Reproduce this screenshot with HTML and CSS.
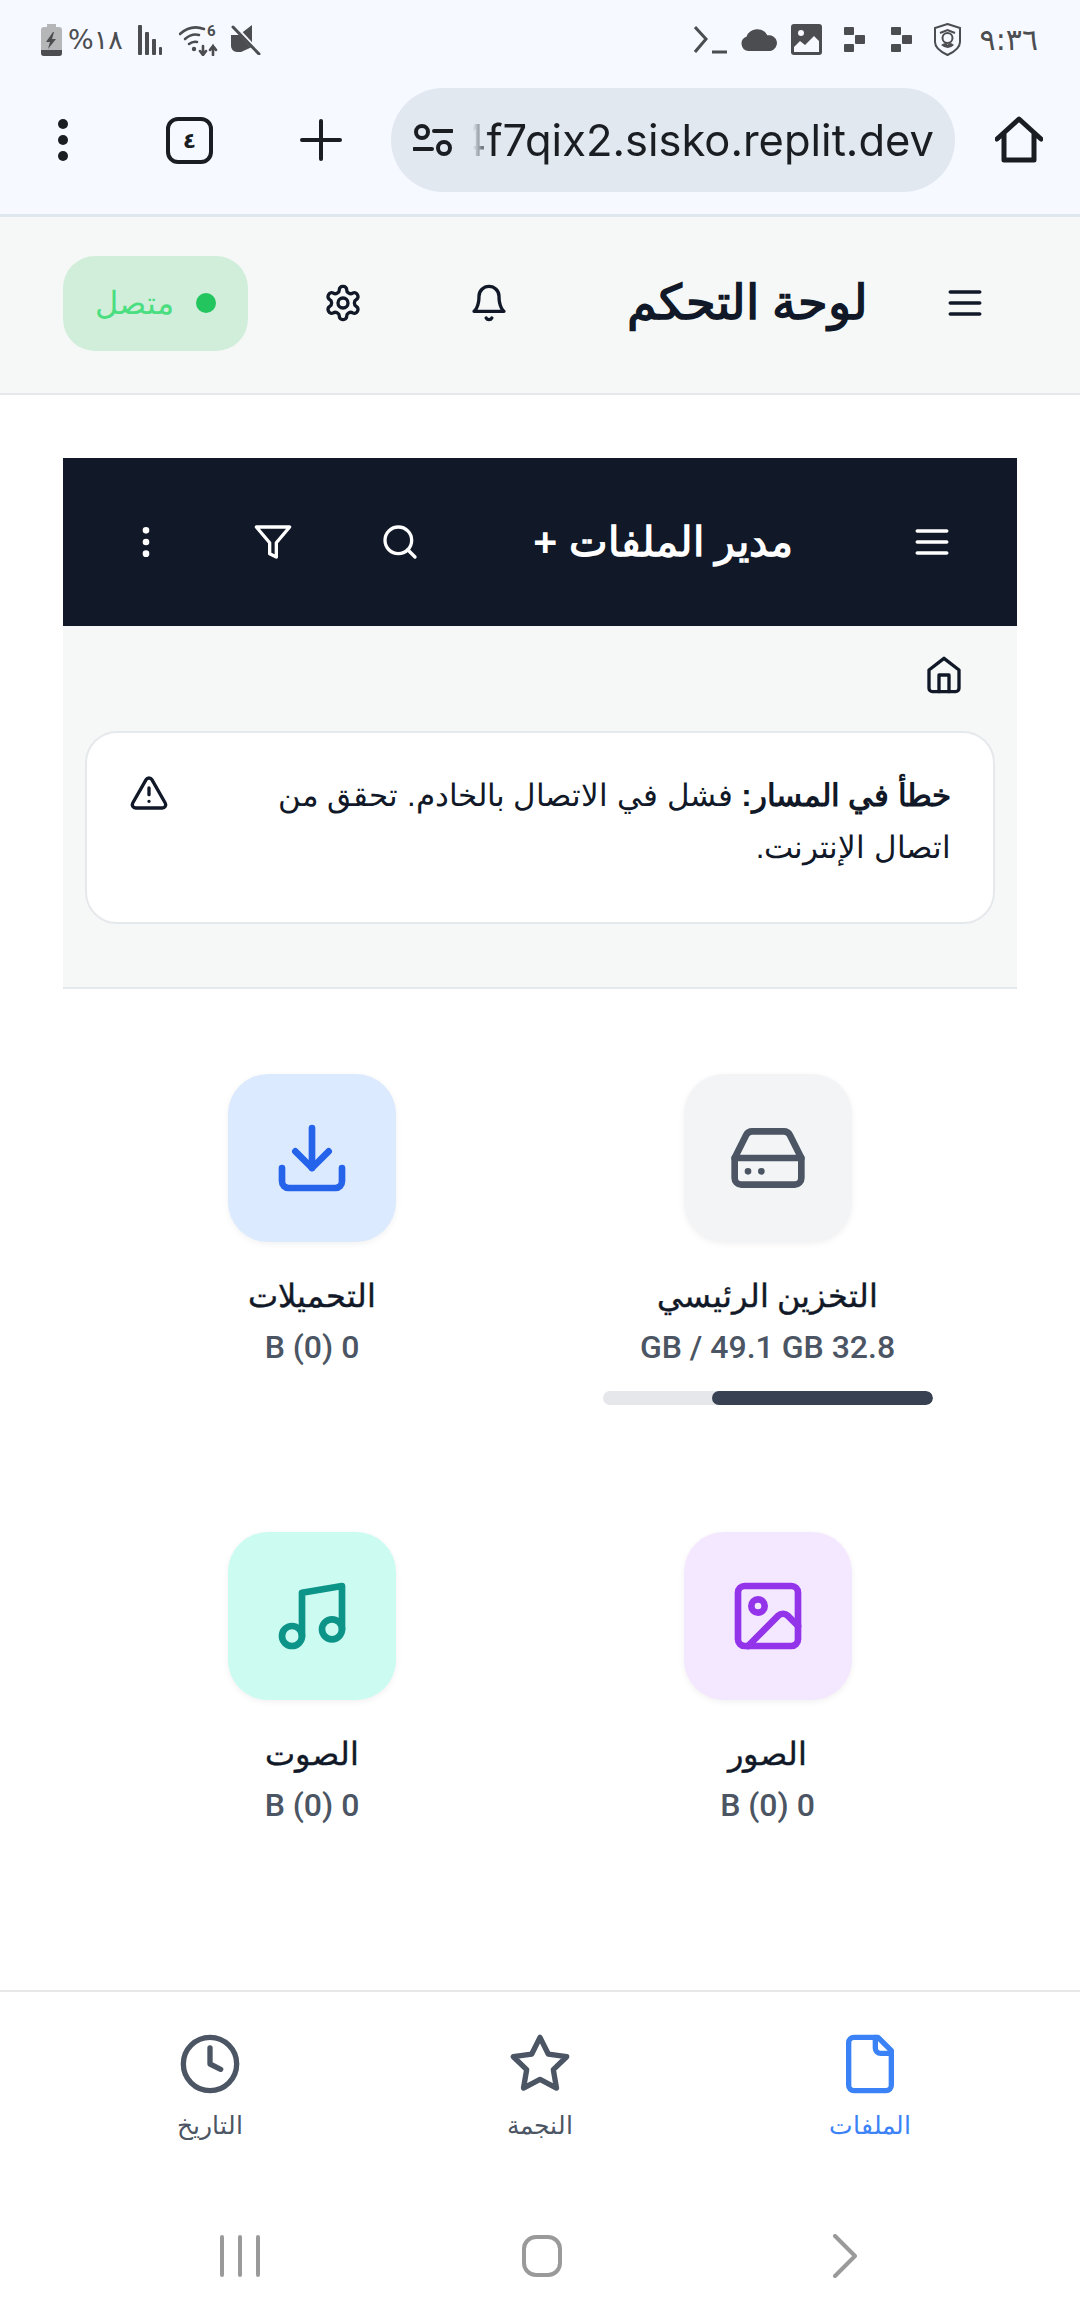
FILE: index.html
```html
<!DOCTYPE html>
<html lang="ar" dir="rtl">

<head>
    <meta charset="UTF-8">
    <title>لوحة التحكم</title>
    <link rel="stylesheet" href="styles.css">
</head>

<body>
    <!-- شريط الحالة -->
    <div class="status" dir="ltr">
        <div class="status-side">
            <svg class="st-battery" viewBox="0 0 21 32"><path fill="#b4b6b8" d="M6 0h9v3h3a3 3 0 0 1 3 3v23a3 3 0 0 1-3 3H3a3 3 0 0 1-3-3V6a3 3 0 0 1 3-3h3z"/><path fill="#4b4d50" d="M0 26h21v3a3 3 0 0 1-3 3H3a3 3 0 0 1-3-3z"/><path fill="#4b4d50" d="M12 8 5 18h4l-2 7 8-10h-4l2-7z"/></svg>
            <span class="st-text st-pct">%١٨</span>
            <svg class="st-signal" viewBox="0 0 28 30"><g fill="#4b4d50"><rect x="0" y="0" width="4" height="30" rx="1"/><rect x="7" y="7" width="4" height="23" rx="1"/><rect x="14" y="14" width="4" height="16" rx="1"/><rect x="21" y="22" width="3" height="8" rx="1"/></g></svg>
            <svg class="st-wifi" viewBox="0 0 40 32"><g fill="none" stroke="#4b4d50" stroke-width="2.6" stroke-linecap="round"><path d="M1 10Q12 0 25 5"/><path d="M6 15q7-6 14-4"/><path d="M10 20q4-3 8-2"/><path d="M24 31v-9m-3 5 3 4 3-4"/><path d="M34 31v-9m-3 4 3-4 3 4"/></g><circle cx="15" cy="25" r="2.2" fill="#4b4d50"/><text x="28" y="12" class="st-six">6</text></svg>
            <svg class="st-mute" viewBox="0 0 30 30"><path fill="#4b4d50" d="M0 10h8L21 0v22L10 27H6a6 6 0 0 1-6-6z"/><path stroke="#f6f9ff" stroke-width="4.500" d="M3 1l26 28"/><path stroke="#4b4d50" stroke-width="3" stroke-linecap="round" d="M2 2l26 27"/></svg>
        </div>
        <div class="status-side">
            <svg class="st-term" viewBox="0 0 33 30"><path fill="none" stroke="#4b4d50" stroke-width="3" d="M1 2l11 12L1 27"/><path stroke="#4b4d50" stroke-width="3" d="M18 27h15"/></svg>
            <svg class="st-cloud" viewBox="0 0 36 22"><path fill="#4b4d50" d="M8 22a7 7 0 0 1-2-13.600A11 11 0 0 1 26 7a7.500 7.500 0 0 1 3 15z"/></svg>
            <svg class="st-img" viewBox="0 0 31 31"><rect width="31" height="31" rx="3" fill="#4b4d50"/><path fill="#f6f9ff" d="M3 28v-5l6-6 5 4 9-9 5 5v11z"/><circle cx="10" cy="9" r="3" fill="#f6f9ff"/></svg>
            <svg class="st-dots" viewBox="0 0 21 25"><g fill="#4b4d50"><rect width="10" height="8" rx="1"/><rect x="11" y="8" width="10" height="9" rx="1"/><rect y="17" width="10" height="8" rx="1"/></g></svg>
            <svg class="st-dots" viewBox="0 0 21 25"><g fill="#4b4d50"><rect width="10" height="8" rx="1"/><rect x="11" y="8" width="10" height="9" rx="1"/><rect y="17" width="10" height="8" rx="1"/></g></svg>
            <svg class="st-shield" viewBox="0 0 27 33"><path fill="none" stroke="#4b4d50" stroke-width="2" d="M13.500 1 26 5v14c0 6-6 10-12.500 13C7 29 1 25 1 19V5z"/><path fill="none" stroke="#4b4d50" stroke-width="2" d="M6 10l7.500-3 7.500 3"/><circle cx="13.500" cy="15" r="5" fill="none" stroke="#4b4d50" stroke-width="2"/><path fill="#4b4d50" d="M7 22q6-4 6.500 0 2-4 6.500 0-6 6-13 0z"/></svg>
            <span class="st-text st-time">٩:٣٦</span>
        </div>
    </div>

    <!-- شريط المتصفح -->
    <div class="browser" dir="ltr">
        <svg class="br-dots" viewBox="0 0 12 42"><circle cx="6" cy="5" r="5"/><circle cx="6" cy="21" r="5"/><circle cx="6" cy="37" r="5"/></svg>
        <div class="br-tabs">٤</div>
        <svg class="br-plus" viewBox="0 0 42 42"><path d="M21 2v38M2 21h38"/></svg>
        <div class="br-url">
            <svg class="br-tune" viewBox="0 0 40 32"><circle cx="9" cy="8" r="6"/><path d="M21 7h18M1 25h18"/><circle cx="31" cy="24" r="6"/></svg>
            <div class="br-addr"><span dir="ltr">4f7qix2.sisko.replit.dev</span></div>
        </div>
        <svg class="br-home" viewBox="0 0 48 48"><path d="M2 23 24 3l22 20M9 18v26h30V18"/></svg>
    </div>

    <!-- رأس التطبيق -->
    <header class="app-head">
        <svg class="ic ic-44" viewBox="0 0 24 24"><path d="M4 6h16M4 12h16M4 18h16"/></svg>
        <h1 class="app-title">لوحة التحكم</h1>
        <svg class="ic ic-40 bell" viewBox="0 0 24 24"><path d="M6 8a6 6 0 0 1 12 0c0 7 3 9 3 9H3s3-2 3-9"/><path d="M10.300 21a1.940 1.940 0 0 0 3.400 0"/></svg>
        <svg class="ic ic-40 gear" viewBox="0 0 24 24"><path d="M12.220 2h-.44a2 2 0 0 0-2 2v.18a2 2 0 0 1-1 1.730l-.43.25a2 2 0 0 1-2 0l-.15-.08a2 2 0 0 0-2.730.73l-.22.38a2 2 0 0 0 .73 2.730l.15.1a2 2 0 0 1 1 1.720v.51a2 2 0 0 1-1 1.740l-.15.09a2 2 0 0 0-.73 2.730l.22.38a2 2 0 0 0 2.730.73l.15-.08a2 2 0 0 1 2 0l.43.25a2 2 0 0 1 1 1.730V20a2 2 0 0 0 2 2h.44a2 2 0 0 0 2-2v-.18a2 2 0 0 1 1-1.730l.43-.25a2 2 0 0 1 2 0l.15.08a2 2 0 0 0 2.730-.73l.22-.39a2 2 0 0 0-.73-2.730l-.15-.08a2 2 0 0 1-1-1.740v-.5a2 2 0 0 1 1-1.740l.15-.09a2 2 0 0 0 .73-2.730l-.22-.38a2 2 0 0 0-2.730-.73l-.15.08a2 2 0 0 1-2 0l-.43-.25a2 2 0 0 1-1-1.730V4a2 2 0 0 0-2-2z"/><circle cx="12" cy="12" r="3"/></svg>
        <div class="online"><span class="online-dot"></span>متصل</div>
    </header>

    <main class="content">
        <section class="files">
            <div class="files-bar">
                <svg class="ic ic-44" viewBox="0 0 24 24"><path d="M4 6h16M4 12h16M4 18h16"/></svg>
                <h2 class="files-title">مدير الملفات +</h2>
                <svg class="ic ic-40" viewBox="0 0 24 24"><circle cx="11" cy="11" r="8"/><path d="m21 21-4.350-4.350"/></svg>
                <svg class="ic ic-40" viewBox="0 0 24 24"><path d="M22 3H2l8 9.460V19l4 2v-8.540z"/></svg>
                <svg class="ic ic-40" viewBox="0 0 24 24"><circle cx="12" cy="5" r="1"/><circle cx="12" cy="12" r="1"/><circle cx="12" cy="19" r="1"/></svg>
            </div>
            <div class="files-panel">
                <svg class="ic ic-40 crumb" viewBox="0 0 24 24"><path d="M3 9l9-7 9 7v11a2 2 0 0 1-2 2H5a2 2 0 0 1-2-2z"/><path d="M9 22V12h6v10"/></svg>
                <div class="error-card">
                    <p class="error-text"><b>خطأ في المسار:</b> فشل في الاتصال بالخادم. تحقق من اتصال الإنترنت.</p>
                    <svg class="ic ic-40 error-ic" viewBox="0 0 24 24"><path d="m21.730 18-8-14a2 2 0 0 0-3.480 0l-8 14A2 2 0 0 0 4 21h16a2 2 0 0 0 1.730-3"/><path d="M12 9v4M12 17h.01"/></svg>
                </div>
            </div>
            <div class="cats">
                <div class="cat">
                    <div class="cat-box box-gray"><svg class="ic ic-80" viewBox="0 0 24 24"><path d="M22 12H2"/><path d="M5.450 5.110 2 12v6a2 2 0 0 0 2 2h16a2 2 0 0 0 2-2v-6l-3.450-6.890A2 2 0 0 0 16.760 4H7.240a2 2 0 0 0-1.790 1.110z"/><path d="M6 16h.01M10 16h.01"/></svg></div>
                    <div class="cat-name">التخزين الرئيسي</div>
                    <div class="cat-size" dir="ltr">GB / 49.1 GB 32.8</div>
                    <div class="usage"><div class="usage-fill" style="width: 66.800%"></div></div>
                </div>
                <div class="cat">
                    <div class="cat-box box-blue"><svg class="ic ic-80" viewBox="0 0 24 24"><path d="M21 15v4a2 2 0 0 1-2 2H5a2 2 0 0 1-2-2v-4"/><path d="m7 10 5 5 5-5"/><path d="M12 15V3"/></svg></div>
                    <div class="cat-name">التحميلات</div>
                    <div class="cat-size" dir="ltr">B (0) 0</div>
                </div>
                <div class="cat">
                    <div class="cat-box box-purple"><svg class="ic ic-80" viewBox="0 0 24 24"><rect x="3" y="3" width="18" height="18" rx="2"/><circle cx="9" cy="9" r="2"/><path d="m21 15-3.086-3.086a2 2 0 0 0-2.828 0L6 21"/></svg></div>
                    <div class="cat-name">الصور</div>
                    <div class="cat-size" dir="ltr">B (0) 0</div>
                </div>
                <div class="cat">
                    <div class="cat-box box-teal"><svg class="ic ic-80" viewBox="0 0 24 24"><path d="M9 18V5l12-2v13"/><circle cx="6" cy="18" r="3"/><circle cx="18" cy="16" r="3"/></svg></div>
                    <div class="cat-name">الصوت</div>
                    <div class="cat-size" dir="ltr">B (0) 0</div>
                </div>
            </div>
        </section>
    </main>

    <!-- التنقل السفلي -->
    <nav class="tabs">
        <div class="tab tab-on">
            <svg class="ic ic-64" viewBox="0 0 24 24"><path d="M15 2H6a2 2 0 0 0-2 2v16a2 2 0 0 0 2 2h12a2 2 0 0 0 2-2V7Z"/><path d="M14 2v4a2 2 0 0 0 2 2h4"/></svg>
            <span>الملفات</span>
        </div>
        <div class="tab">
            <svg class="ic ic-64" viewBox="0 0 24 24"><path d="M12 2l3.090 6.260L22 9.270l-5 4.870 1.180 6.880L12 17.770l-6.180 3.250L7 14.140 2 9.270l6.910-1.010z"/></svg>
            <span>النجمة</span>
        </div>
        <div class="tab">
            <svg class="ic ic-64" viewBox="0 0 24 24"><circle cx="12" cy="12" r="10"/><path d="M12 6v6l4 2"/></svg>
            <span>التاريخ</span>
        </div>
    </nav>

    <div class="sysnav" dir="ltr">
        <svg class="sys-ic" viewBox="0 0 44 44"><path d="M4 3v38M22 3v38M40 3v38"/></svg>
        <svg class="sys-ic" viewBox="0 0 44 44"><rect x="4" y="3" width="36" height="38" rx="12"/></svg>
        <svg class="sys-ic" viewBox="0 0 44 44"><path d="M13 2l20 20-20 20"/></svg>
    </div>
</body>

</html>
```

FILE: styles.css
```css
* {
    padding: 0;
    margin: 0;
    box-sizing: border-box;
}

body {
    width: 1080px;
    height: 2316px;
    display: flex;
    flex-direction: column;
    background: #fff;
    color: #111827;
    font-family: "Liberation Sans", sans-serif;
    overflow: hidden;
}

/* status bar */
.status {
    height: 70px;
    padding: 23px 42px 0 41px;
    display: flex;
    justify-content: space-between;
    align-items: flex-start;
    background: #f6f9ff;
}

.status-side {
    display: flex;
    align-items: center;
    height: 33px;
}

.st-text {
    font-family: "DejaVu Sans", sans-serif;
    color: #4b4d50;
    white-space: nowrap;
}

.st-six {
    font-family: Roboto, sans-serif;
    font-size: 15px;
    font-weight: 700;
    fill: #4b4d50;
}

.st-battery { width: 21px; height: 32px; }
.st-pct { margin: 0 15px 0 6px; font-size: 27px; }
.st-signal { width: 28px; height: 30px; }
.st-wifi { width: 40px; height: 32px; margin-left: 13px; }
.st-mute { width: 30px; height: 30px; margin-left: 12px; }
.st-term { width: 33px; height: 30px; }
.st-cloud { width: 38px; height: 23px; margin-left: 13px; }
.st-img { width: 31px; height: 31px; margin-left: 13px; }
.st-dots { width: 21px; height: 25px; margin-left: 22px; }
.st-dots + .st-dots { margin-left: 26px; }
.st-shield { width: 27px; height: 33px; margin-left: 22px; }
.st-time { margin-left: 19px; font-size: 30px; }

/* browser bar */
.browser {
    height: 147px;
    padding-bottom: 4px;
    border-bottom: 3px solid #dfe7ee;
    display: flex;
    align-items: center;
    background: #f6f9ff;
}

.br-dots {
    width: 12px;
    height: 42px;
    margin-left: 57px;
    fill: #1a1d21;
}

.br-tabs {
    width: 47px;
    height: 47px;
    margin-left: 97px;
    border: 4px solid #1a1d21;
    border-radius: 12px;
    display: flex;
    align-items: center;
    justify-content: center;
    font-family: "DejaVu Sans", sans-serif;
    font-size: 22px;
    font-weight: 700;
    color: #1a1d21;
}

.br-plus {
    width: 42px;
    height: 42px;
    margin-left: 87px;
    fill: none;
    stroke: #1a1d21;
    stroke-width: 4;
    stroke-linecap: round;
}

.br-url {
    width: 564px;
    height: 104px;
    margin-left: 49px;
    padding: 0 22px;
    border-radius: 52px;
    display: flex;
    align-items: center;
    background: #e1e8f0;
}

.br-tune {
    width: 40px;
    height: 32px;
    flex: none;
    fill: none;
    stroke: #1a1d21;
    stroke-width: 4;
    stroke-linecap: round;
}

.br-addr {
    width: 461px;
    flex: none;
    margin-left: 20px;
    direction: rtl;
    text-align: right;
    font-family: Inter, sans-serif;
    font-size: 43.500px;
    color: #1a1d21;
    white-space: nowrap;
    overflow: hidden;
    -webkit-mask-image: linear-gradient(to right, transparent, #000 17px);
    mask-image: linear-gradient(to right, transparent, #000 17px);
}

.br-home {
    width: 48px;
    height: 48px;
    margin-left: 40px;
    fill: none;
    stroke: #1a1d21;
    stroke-width: 5;
    stroke-linejoin: round;
    stroke-linecap: round;
}

/* svg icons */
.ic {
    fill: none;
    stroke: currentColor;
    stroke-width: 2;
    stroke-linecap: round;
    stroke-linejoin: round;
    flex: none;
}

.ic-40 { width: 40px; height: 40px; }
.ic-44 { width: 44px; height: 44px; }
.ic-64 { width: 64px; height: 64px; }
.ic-80 { width: 80px; height: 80px; }

/* app header */
.app-head {
    height: 178px;
    padding: 0 93px 4px 63px;
    border-bottom: 2px solid #e5e9ec;
    display: flex;
    align-items: center;
    background: #f6f8f8;
}

.app-title {
    flex: 1;
    margin-right: 75px;
    font-size: 48px;
    font-weight: 700;
    line-height: 1;
}

.gear { margin-right: 106px; }

.online {
    width: 185px;
    height: 95px;
    margin-right: 75px;
    border-radius: 32px;
    display: flex;
    align-items: center;
    justify-content: center;
    gap: 22px;
    background: #d1eedb;
    color: #4ade80;
    font-size: 32px;
}

.online-dot {
    width: 20px;
    height: 20px;
    border-radius: 50%;
    background: #22c55e;
}

/* files section */
.content {
    flex: 1;
    padding: 63px 63px 0;
}

.files-bar {
    height: 168px;
    padding: 0 63px 0 63px;
    display: flex;
    align-items: center;
    gap: 87px;
    background: #111827;
    color: #fff;
}

.files-title {
    flex: 1;
    margin-right: 30px;
    font-size: 41px;
    font-weight: 700;
    line-height: 1;
}

.files-panel {
    height: 363px;
    padding: 29px 22px 0;
    border-bottom: 2px solid #e5e9ec;
    background: #f6f8f8;
}

.crumb {
    display: block;
    margin-right: 31px;
}

.error-card {
    height: 193px;
    margin-top: 36px;
    padding: 37px 42px 0 42px;
    border: 2px solid #e5e9ec;
    border-radius: 32px;
    display: flex;
    justify-content: space-between;
    background: #fff;
}

.error-text {
    width: 700px;
    font-size: 31.200px;
    line-height: 52px;
}

.error-ic {
    margin-top: 3px;
}

.cats {
    padding: 85px 22px 0 21px;
    display: grid;
    grid-template-columns: 455px 456px;
    grid-template-rows: 331px auto;
    row-gap: 127px;
}

.cat {
    display: flex;
    flex-direction: column;
    align-items: center;
}

.cat-box {
    width: 168px;
    height: 168px;
    flex: none;
    margin-bottom: 30px;
    border-radius: 40px;
    display: flex;
    align-items: center;
    justify-content: center;
    box-shadow: 0 2px 6px rgba(0, 0, 0, 0.06);
}

.box-gray { background: #f3f4f6; color: #4b5563; }
.box-blue { background: #dbeafe; color: #2563eb; }
.box-purple { background: #f3e8ff; color: #9333ea; }
.box-teal { background: #ccfbf1; color: #0d9488; }

.cat-name {
    height: 48px;
    font-size: 32px;
    line-height: 48px;
    -webkit-text-stroke: 0.4px currentColor;
}

.cat-size {
    margin-top: 9px;
    font-family: Roboto, sans-serif;
    font-size: 32px;
    font-weight: 500;
    line-height: 36px;
    color: #4b5563;
}

.usage {
    width: 330px;
    height: 14px;
    margin-top: 26px;
    flex: none;
    border-radius: 7px;
    background: #e5e7eb;
    overflow: hidden;
}

.usage-fill {
    height: 100%;
    border-radius: 7px;
    background: #374151;
}

/* bottom tabs */
.tabs {
    height: 197px;
    padding: 40px 45px 0;
    border-top: 2px solid #e7e7e7;
    display: flex;
    background: #fff;
}

.tab {
    flex: 1;
    display: flex;
    flex-direction: column;
    align-items: center;
    gap: 15px;
    color: #4b5563;
    font-size: 25px;
}

.tab-on {
    color: #3b82f6;
}

.sysnav {
    height: 129px;
    padding: 47px 214px 0 218px;
    display: flex;
    justify-content: space-between;
    align-items: flex-start;
    background: #fff;
}

.sys-ic {
    width: 44px;
    height: 44px;
    fill: none;
    stroke: #9a9a9a;
    stroke-width: 4;
    stroke-linecap: round;
    stroke-linejoin: round;
}
```
